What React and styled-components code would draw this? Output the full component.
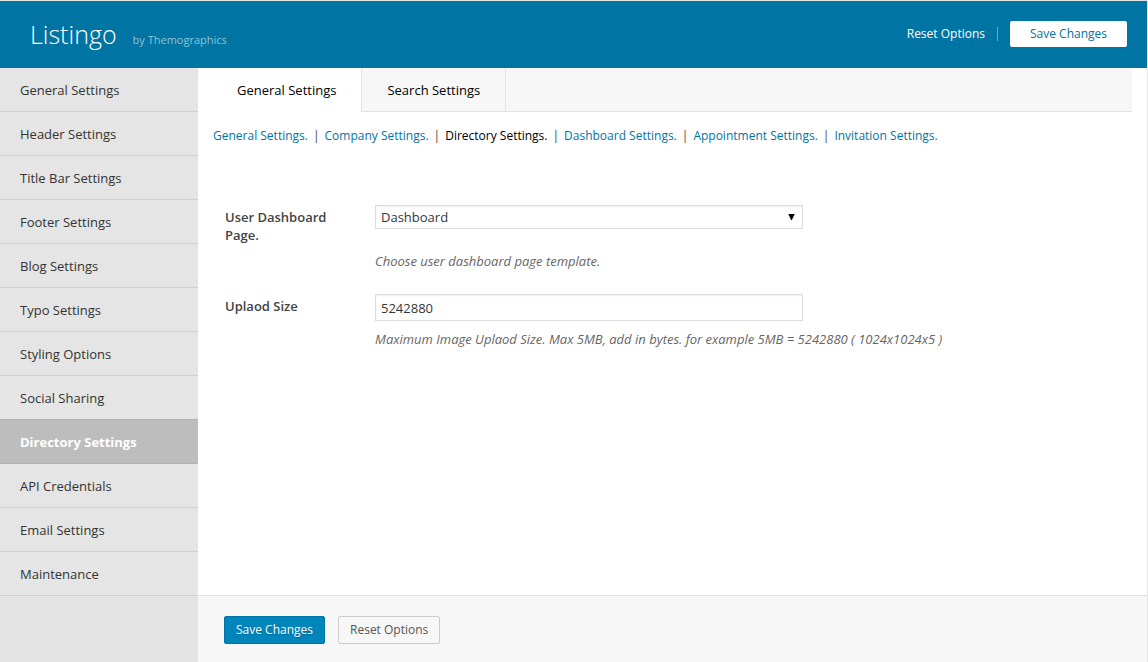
import React, { useState } from 'react';
import styled, { createGlobalStyle } from 'styled-components';

const Global = createGlobalStyle`
  *, *::before, *::after { box-sizing: border-box; }
  body {
    margin: 0;
    background: #fff;
    color: #444;
    font: 13px/18px "Segoe UI", "Open Sans", sans-serif;
  }
  button, input, select { font: inherit; margin: 0; }
  a { text-decoration: none; }
  ul { list-style: none; margin: 0; padding: 0; }
`;

const Page = styled.div`
  display: flex;
  flex-direction: column;
  min-height: 100vh;
  border: solid #e5e5e5;
  border-width: 1px 1px 0 0;
`;

const Header = styled.header`
  display: flex;
  align-items: center;
  justify-content: space-between;
  height: 67px;
  padding: 0 20px 1px 30px;
  background: #0074a2;
  color: #fff;
`;

const Brand = styled.div`
  display: flex;
  align-items: baseline;
  gap: 16px;
`;

const Title = styled.h1`
  margin: 0;
  font-size: 25px;
  line-height: 36px;
  font-weight: 300;
`;

const Author = styled.span`
  font-size: 11px;
  color: #8fc3da;
`;

const HeaderActions = styled.div`
  display: flex;
  align-items: center;
  gap: 12px;
`;

const TextButton = styled.button`
  padding: 0;
  border: 0;
  background: none;
  color: #fff;
  font-size: 12px;
  cursor: pointer;
`;

const Divider = styled.span`
  width: 1px;
  height: 14px;
  background: #66acc7;
`;

const HeaderSave = styled.button`
  width: 117px;
  height: 26px;
  padding: 0;
  border: 0;
  border-radius: 2px;
  background: #fff;
  color: #0074a2;
  font-size: 12px;
  cursor: pointer;
`;

const Body = styled.div`
  display: flex;
  flex: 1;
`;

const Sidebar = styled.nav`
  flex: none;
  width: 198px;
  background: #e3e3e3;
`;

const SideLink = styled.a`
  display: block;
  height: 44px;
  padding: 0 20px;
  line-height: 45px;
  border-bottom: 1px solid ${(p) => (p.$active ? '#b0b0b0' : '#d0d0d0')};
  background: ${(p) => (p.$active ? '#bdbdbd' : '#e5e5e5')};
  box-shadow: ${(p) => (p.$active ? '0 -1px 0 #b0b0b0' : 'none')};
  color: ${(p) => (p.$active ? '#fff' : '#333')};
  font-weight: ${(p) => (p.$active ? 700 : 400)};
`;

const Main = styled.main`
  display: flex;
  flex: 1;
  flex-direction: column;
  min-width: 0;
`;

const Tabs = styled.div`
  display: flex;
  height: 44px;
  margin-right: 15px;
  background: #f7f7f7;
  border-bottom: 1px solid #e2e2e2;
`;

const Tab = styled.button`
  height: ${(p) => (p.$active ? 44 : 43)}px;
  padding: 0 25px 0 ${(p) => (p.$active ? 39 : 25)}px;
  border: 0;
  border-right: 1px solid #e2e2e2;
  background: ${(p) => (p.$active ? '#fff' : 'transparent')};
  color: #000;
  cursor: pointer;
`;

const SectionLinks = styled.ul`
  display: flex;
  flex-wrap: wrap;
  padding: 15px 15px 0;
  font-size: 12px;
`;

const SectionItem = styled.li`
  & + &::before {
    content: "|";
    margin: 0 5px;
    color: #444;
  }
`;

const SectionLink = styled.a`
  color: ${(p) => (p.$active ? '#000' : '#0074a2')};
`;

const Form = styled.form`
  display: flex;
  flex-direction: column;
  gap: 24px;
  padding: 60px 15px 24px 27px;
`;

const Field = styled.div`
  display: grid;
  grid-template-columns: 150px minmax(0, 1fr);
`;

const Label = styled.label`
  padding: 3px 40px 0 0;
  font-weight: 600;
`;

const Control = styled.div`
  display: flex;
  flex-direction: column;
  align-items: flex-start;
  gap: ${(p) => p.$gap}px;
`;

const controlStyle = `
  width: 428px;
  max-width: 100%;
  border: 1px solid #ddd;
  border-radius: 0;
  background-color: #fff;
  box-shadow: inset 0 1px 2px rgba(0, 0, 0, 0.07);
  color: #32373c;
`;

const SelectWrap = styled.div`
  display: grid;
  align-items: center;
  width: 428px;
  max-width: 100%;
  & > * { grid-area: 1 / 1; }
`;

const Select = styled.select`
  ${controlStyle}
  appearance: none;
  height: 24px;
  padding: 0 24px 0 5px;
`;

const Arrow = styled.svg`
  justify-self: end;
  margin-right: 8px;
  pointer-events: none;
`;

const Input = styled.input`
  ${controlStyle}
  height: 27px;
  padding: 0 5px;
`;

const Hint = styled.p`
  margin: 0;
  color: #666;
  font-style: italic;
`;

const Footer = styled.footer`
  display: flex;
  gap: 13px;
  height: 67px;
  margin-top: auto;
  padding: 20px 26px;
  background: #f7f7f7;
  border-top: 1px solid #e2e2e2;
`;

const FooterButton = styled.button`
  height: 28px;
  padding: 0 11px;
  border: 1px solid ${(p) => (p.$primary ? '#0073aa' : '#ccc')};
  border-radius: 2px;
  background: ${(p) => (p.$primary ? '#0085ba' : '#f7f7f7')};
  color: ${(p) => (p.$primary ? '#fff' : '#555')};
  text-shadow: ${(p) => (p.$primary ? '0 1px 1px #006799' : 'none')};
  font-size: 12px;
  cursor: pointer;
`;

const sections = [
  'General Settings', 'Header Settings', 'Title Bar Settings', 'Footer Settings',
  'Blog Settings', 'Typo Settings', 'Styling Options', 'Social Sharing',
  'Directory Settings', 'API Credentials', 'Email Settings', 'Maintenance',
];

const subsections = [
  'General Settings.', 'Company Settings.', 'Directory Settings.',
  'Dashboard Settings.', 'Appointment Settings.', 'Invitation Settings.',
];

export default function App() {
  const [size, setSize] = useState('5242880');
  return (
    <>
      <Global />
      <Page>
        <Header>
          <Brand>
            <Title>Listingo</Title>
            <Author>by Themographics</Author>
          </Brand>
          <HeaderActions>
            <TextButton type="button">Reset Options</TextButton>
            <Divider />
            <HeaderSave type="button">Save Changes</HeaderSave>
          </HeaderActions>
        </Header>
        <Body>
          <Sidebar>
            <ul>
              {sections.map((name) => (
                <li key={name}>
                  <SideLink href="#" $active={name === 'Directory Settings'}>{name}</SideLink>
                </li>
              ))}
            </ul>
          </Sidebar>
          <Main>
            <Tabs role="tablist">
              <Tab type="button" role="tab" aria-selected="true" $active>General Settings</Tab>
              <Tab type="button" role="tab" aria-selected="false">Search Settings</Tab>
            </Tabs>
            <SectionLinks>
              {subsections.map((name) => (
                <SectionItem key={name}>
                  <SectionLink href="#" $active={name === 'Directory Settings.'}>{name}</SectionLink>
                </SectionItem>
              ))}
            </SectionLinks>
            <Form>
              <Field>
                <Label htmlFor="dashboard-page">User Dashboard Page.</Label>
                <Control $gap={23}>
                  <SelectWrap>
                    <Select id="dashboard-page" defaultValue="Dashboard">
                      <option>Dashboard</option>
                    </Select>
                    <Arrow width="7" height="6" viewBox="0 0 7 6" aria-hidden="true">
                      <path d="M0.3 0H6.7L3.9 6H3.1Z" fill="#000" />
                    </Arrow>
                  </SelectWrap>
                  <Hint>Choose user dashboard page template.</Hint>
                </Control>
              </Field>
              <Field>
                <Label htmlFor="upload-size">Uplaod Size</Label>
                <Control $gap={9}>
                  <Input id="upload-size" type="text" value={size} onChange={(e) => setSize(e.target.value)} />
                  <Hint>Maximum Image Uplaod Size. Max 5MB, add in bytes. for example 5MB = 5242880 ( 1024x1024x5 )</Hint>
                </Control>
              </Field>
            </Form>
            <Footer>
              <FooterButton type="button" $primary>Save Changes</FooterButton>
              <FooterButton type="button">Reset Options</FooterButton>
            </Footer>
          </Main>
        </Body>
      </Page>
    </>
  );
}
